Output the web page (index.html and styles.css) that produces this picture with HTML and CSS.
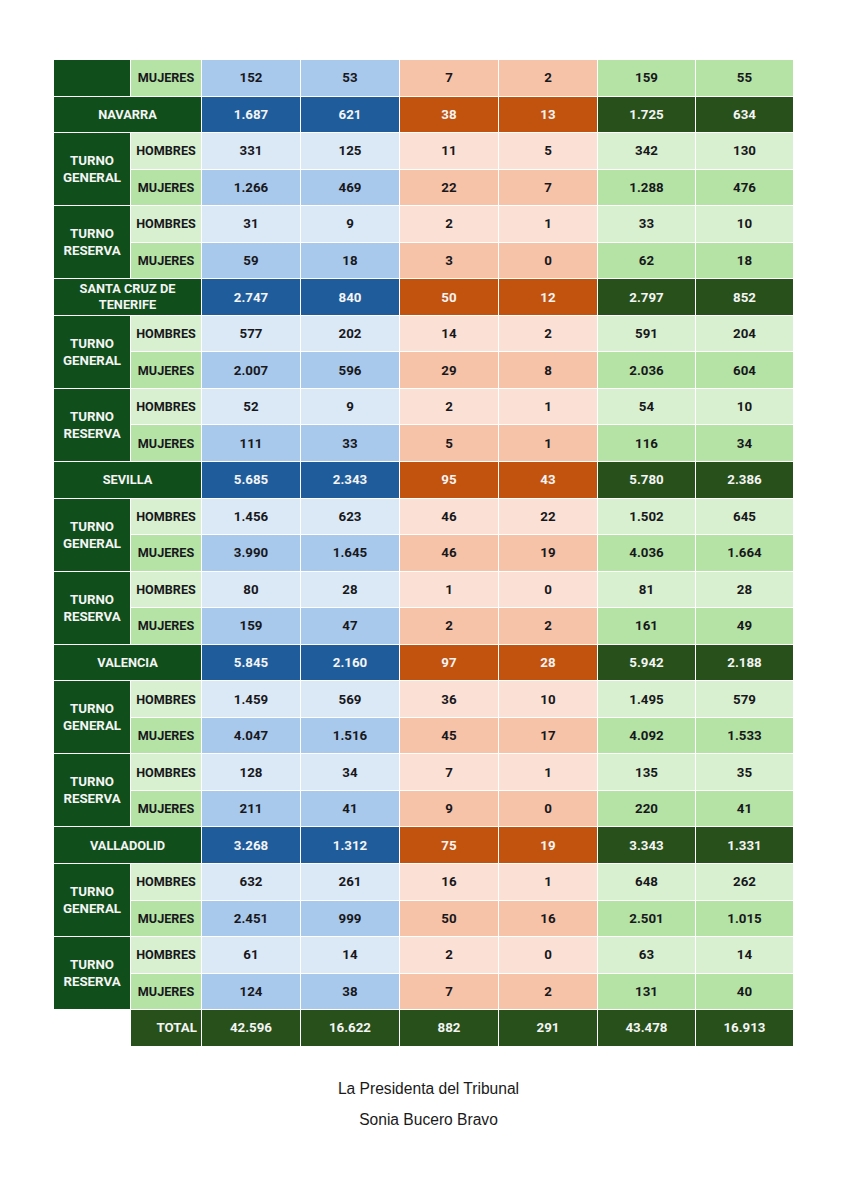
FILE: index.html
```html
<!DOCTYPE html>
<html lang="es">
<head>
<meta charset="utf-8">
<title>Tabla</title>
<link rel="stylesheet" href="styles.css">
</head>
<body>
<main class="page">
<table class="grid">
<colgroup>
<col class="c-grp"><col class="c-sex"><col class="c-n"><col class="c-n"><col class="c-n"><col class="c-n"><col class="c-m"><col class="c-m">
</colgroup>
<tbody>
<tr class="m"><td class="grp"></td><td class="sex">MUJERES</td><td class="b">152</td><td class="b">53</td><td class="o">7</td><td class="o">2</td><td class="g">159</td><td class="g">55</td></tr>

<tr class="r"><td class="reg" colspan="2">NAVARRA</td><td class="b">1.687</td><td class="b">621</td><td class="o">38</td><td class="o">13</td><td class="g">1.725</td><td class="g">634</td></tr>
<tr class="h"><td class="grp" rowspan="2">TURNO<br>GENERAL</td><td class="sex">HOMBRES</td><td class="b">331</td><td class="b">125</td><td class="o">11</td><td class="o">5</td><td class="g">342</td><td class="g">130</td></tr>
<tr class="m"><td class="sex">MUJERES</td><td class="b">1.266</td><td class="b">469</td><td class="o">22</td><td class="o">7</td><td class="g">1.288</td><td class="g">476</td></tr>
<tr class="h"><td class="grp" rowspan="2">TURNO<br>RESERVA</td><td class="sex">HOMBRES</td><td class="b">31</td><td class="b">9</td><td class="o">2</td><td class="o">1</td><td class="g">33</td><td class="g">10</td></tr>
<tr class="m"><td class="sex">MUJERES</td><td class="b">59</td><td class="b">18</td><td class="o">3</td><td class="o">0</td><td class="g">62</td><td class="g">18</td></tr>

<tr class="r"><td class="reg two" colspan="2">SANTA CRUZ DE<br>TENERIFE</td><td class="b">2.747</td><td class="b">840</td><td class="o">50</td><td class="o">12</td><td class="g">2.797</td><td class="g">852</td></tr>
<tr class="h"><td class="grp" rowspan="2">TURNO<br>GENERAL</td><td class="sex">HOMBRES</td><td class="b">577</td><td class="b">202</td><td class="o">14</td><td class="o">2</td><td class="g">591</td><td class="g">204</td></tr>
<tr class="m"><td class="sex">MUJERES</td><td class="b">2.007</td><td class="b">596</td><td class="o">29</td><td class="o">8</td><td class="g">2.036</td><td class="g">604</td></tr>
<tr class="h"><td class="grp" rowspan="2">TURNO<br>RESERVA</td><td class="sex">HOMBRES</td><td class="b">52</td><td class="b">9</td><td class="o">2</td><td class="o">1</td><td class="g">54</td><td class="g">10</td></tr>
<tr class="m"><td class="sex">MUJERES</td><td class="b">111</td><td class="b">33</td><td class="o">5</td><td class="o">1</td><td class="g">116</td><td class="g">34</td></tr>

<tr class="r"><td class="reg" colspan="2">SEVILLA</td><td class="b">5.685</td><td class="b">2.343</td><td class="o">95</td><td class="o">43</td><td class="g">5.780</td><td class="g">2.386</td></tr>
<tr class="h"><td class="grp" rowspan="2">TURNO<br>GENERAL</td><td class="sex">HOMBRES</td><td class="b">1.456</td><td class="b">623</td><td class="o">46</td><td class="o">22</td><td class="g">1.502</td><td class="g">645</td></tr>
<tr class="m"><td class="sex">MUJERES</td><td class="b">3.990</td><td class="b">1.645</td><td class="o">46</td><td class="o">19</td><td class="g">4.036</td><td class="g">1.664</td></tr>
<tr class="h"><td class="grp" rowspan="2">TURNO<br>RESERVA</td><td class="sex">HOMBRES</td><td class="b">80</td><td class="b">28</td><td class="o">1</td><td class="o">0</td><td class="g">81</td><td class="g">28</td></tr>
<tr class="m"><td class="sex">MUJERES</td><td class="b">159</td><td class="b">47</td><td class="o">2</td><td class="o">2</td><td class="g">161</td><td class="g">49</td></tr>

<tr class="r"><td class="reg" colspan="2">VALENCIA</td><td class="b">5.845</td><td class="b">2.160</td><td class="o">97</td><td class="o">28</td><td class="g">5.942</td><td class="g">2.188</td></tr>
<tr class="h"><td class="grp" rowspan="2">TURNO<br>GENERAL</td><td class="sex">HOMBRES</td><td class="b">1.459</td><td class="b">569</td><td class="o">36</td><td class="o">10</td><td class="g">1.495</td><td class="g">579</td></tr>
<tr class="m"><td class="sex">MUJERES</td><td class="b">4.047</td><td class="b">1.516</td><td class="o">45</td><td class="o">17</td><td class="g">4.092</td><td class="g">1.533</td></tr>
<tr class="h"><td class="grp" rowspan="2">TURNO<br>RESERVA</td><td class="sex">HOMBRES</td><td class="b">128</td><td class="b">34</td><td class="o">7</td><td class="o">1</td><td class="g">135</td><td class="g">35</td></tr>
<tr class="m"><td class="sex">MUJERES</td><td class="b">211</td><td class="b">41</td><td class="o">9</td><td class="o">0</td><td class="g">220</td><td class="g">41</td></tr>

<tr class="r"><td class="reg" colspan="2">VALLADOLID</td><td class="b">3.268</td><td class="b">1.312</td><td class="o">75</td><td class="o">19</td><td class="g">3.343</td><td class="g">1.331</td></tr>
<tr class="h"><td class="grp" rowspan="2">TURNO<br>GENERAL</td><td class="sex">HOMBRES</td><td class="b">632</td><td class="b">261</td><td class="o">16</td><td class="o">1</td><td class="g">648</td><td class="g">262</td></tr>
<tr class="m"><td class="sex">MUJERES</td><td class="b">2.451</td><td class="b">999</td><td class="o">50</td><td class="o">16</td><td class="g">2.501</td><td class="g">1.015</td></tr>
<tr class="h"><td class="grp" rowspan="2">TURNO<br>RESERVA</td><td class="sex">HOMBRES</td><td class="b">61</td><td class="b">14</td><td class="o">2</td><td class="o">0</td><td class="g">63</td><td class="g">14</td></tr>
<tr class="m"><td class="sex">MUJERES</td><td class="b">124</td><td class="b">38</td><td class="o">7</td><td class="o">2</td><td class="g">131</td><td class="g">40</td></tr>

<tr class="t"><td class="empty"></td><td class="tot">TOTAL</td><td>42.596</td><td>16.622</td><td>882</td><td>291</td><td>43.478</td><td>16.913</td></tr>
</tbody>
</table>

<footer class="sign">
<p>La Presidenta del Tribunal</p>
<p>Sonia Bucero Bravo</p>
</footer>
</main>
</body>
</html>
```
FILE: styles.css
```css
html, body {
  margin: 0;
  padding: 0;
  background: #ffffff;
}

.page {
  padding: 59px 0 0 53px;
  width: 742px;
}

.grid {
  border-collapse: collapse;
  table-layout: fixed;
  width: 741px;
  font-family: Roboto, "Liberation Sans", Arial, sans-serif;
  font-weight: bold;
  font-size: 13.3px;
  color: #18181c;
}

.c-grp { width: 77px; }
.c-sex { width: 71px; }
.c-n { width: 99px; }
.c-m { width: 98px; }

.grid tr {
  height: 36.55px;
}

.grid td {
  border: 1.5px solid #ffffff;
  padding: 0 2px;
  text-align: center;
  vertical-align: middle;
  line-height: 17px;
}

.grp {
  background: #104e1b;
  color: #f4f4f4;
}

.reg {
  background: #104e1b;
  color: #f4f4f4;
  font-size: 12.8px;
}

.reg.two {
  line-height: 16px;
}

.sex {
  font-size: 12.6px;
}

.h .sex { background: #d9f0d0; }
.m .sex { background: #b5e3a6; }

.h .b { background: #dbe9f7; }
.m .b { background: #a8c9ec; }
.r .b { background: #1f5c9b; color: #f4f4f4; }

.h .o { background: #fbe1d5; }
.m .o { background: #f6c3a9; }
.r .o { background: #c1530f; color: #f4f4f4; }

.h .g { background: #d9f0d0; }
.m .g { background: #b5e3a6; }
.r .g { background: #27501b; color: #f4f4f4; }

.t td {
  background: #27501b;
  color: #f4f4f4;
}

.t td.empty {
  background: transparent;
}

.t td.tot {
  text-align: right;
  padding-right: 4px;
}

.sign {
  padding-left: 9px;
  margin-top: 33px;
  text-align: center;
  font-family: "Liberation Sans", Arial, sans-serif;
  font-size: 15.6px;
  color: #1a1a1a;
}

.sign p {
  margin: 0 0 14px 0;
  line-height: 17px;
}
```
